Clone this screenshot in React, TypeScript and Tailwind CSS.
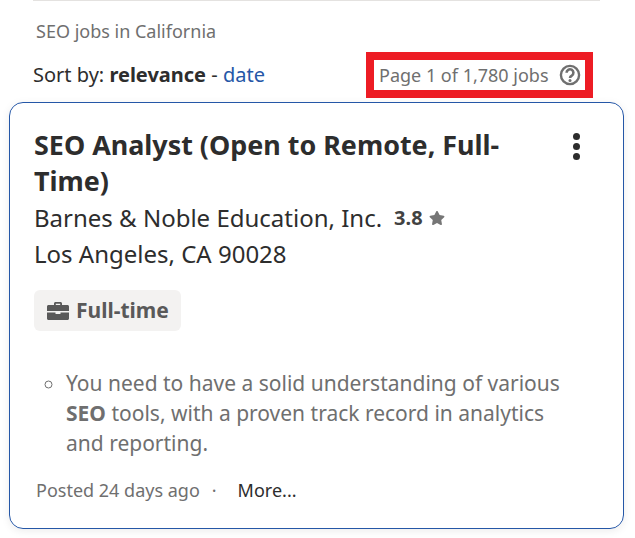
import { FaStar } from 'react-icons/fa';

const App = () => {
  return (
    <div className="h-[538px] w-[635px] overflow-hidden bg-white font-['Noto_Sans',sans-serif]">
      <div className="mx-[33px] h-px w-[567px] bg-[#e4e2e0]" />
      <p className="ml-[36px] mt-[18px] text-[18px] leading-[24px] text-[#6f6f6f]">SEO jobs in California</p>

      <div className="mt-[9px] flex h-[46px] items-center justify-between pl-[33px] pr-[42px]">
        <div className="text-[20px] leading-[26px] text-[#2d2d2d]">
          Sort by: <b className="font-bold">relevance</b> - <a className="text-[#2557a7]">date</a>
        </div>
        <div className="flex h-[46px] w-[227px] items-center border-[8px] border-[#ed1c24] pl-[5px]">
          <span className="text-[18px] leading-[24px] text-[#6f6f6f]">Page 1 of 1,780 jobs</span>
          <svg className="ml-[10px]" width="22" height="22" viewBox="0 0 22 22" fill="none">
            <circle cx="11" cy="11" r="9.1" stroke="#6f6f6f" strokeWidth="2.4" />
            <path d="M7.6 8.800a3.400 3.400 0 1 1 5.200 2.800c-1.200.7-1.800 1.200-1.800 2.300" stroke="#6f6f6f" strokeWidth="2.600" />
            <circle cx="11" cy="16.400" r="1.500" fill="#6f6f6f" />
          </svg>
        </div>
      </div>

      <div className="relative mx-[9px] mt-[4px] h-[427px] w-[615px] rounded-[14px] border border-[#2557a7] pl-[24px] pr-[24px] pt-[24px] shadow-[0_2px_8px_rgba(0,0,0,0.08)]">
        <h2 className="w-[480px] text-[26.9px] font-bold leading-[36px] text-[#2d2d2d]">
          SEO Analyst (Open to Remote, Full-Time)
        </h2>
        <div className="absolute right-[43px] top-[30px] flex flex-col gap-[3px]">
          <span className="size-[7px] rounded-full bg-[#2d2d2d]" />
          <span className="size-[7px] rounded-full bg-[#2d2d2d]" />
          <span className="size-[7px] rounded-full bg-[#2d2d2d]" />
        </div>

        <div className="flex h-[37px] items-center text-[24px] text-[#2d2d2d]">
          <span>Barnes &amp; Noble Education, Inc.</span>
          <span className="ml-[12px] text-[20px] font-bold text-[#424242]">3.8</span>
          <FaStar className="ml-[6px] text-[#767676]" size={16} />
        </div>
        <div className="flex h-[36px] items-center text-[24px] text-[#2d2d2d]">Los Angeles, CA 90028</div>

        <div className="mt-[18px] inline-flex h-[41px] w-[147px] items-center gap-[7px] rounded-[6px] bg-[#f3f2f1] pl-[13px]">
          <svg width="22" height="18" viewBox="0 0 22 18" fill="#595959">
            <path d="M7 3V1.500C7 .7 7.700 0 8.500 0h5c.8 0 1.500.7 1.500 1.500V3h5.500c.8 0 1.500.7 1.500 1.500V9H0V4.500C0 3.700.7 3 1.500 3H7zm1.800 0h4.400V1.800H8.800V3z" />
            <path d="M0 10.500h8.500V12h5v-1.500H22v6c0 .8-.7 1.500-1.500 1.500h-19C.7 18 0 17.300 0 16.500v-6z" />
          </svg>
          <span className="text-[21px] font-bold text-[#595959]">Full-time</span>
        </div>

        <ul className="mt-[37px] list-[circle] pl-[32px] text-[21px] leading-[30px] text-[#6f6f6f]">
          <li className="w-[510px]">
            You need to have a solid understanding of various <b className="font-bold">SEO</b> tools, with a proven track record in analytics and reporting.
          </li>
        </ul>

        <div className="ml-[2px] mt-[20px] flex items-center text-[18px] leading-[24px]">
          <span className="text-[#6f6f6f]">Posted 24 days ago</span>
          <span className="ml-[12px] text-[#6f6f6f]">·</span>
          <span className="ml-[21px] text-[#2d2d2d]">More...</span>
        </div>
      </div>
    </div>
  );
};

export default App;
